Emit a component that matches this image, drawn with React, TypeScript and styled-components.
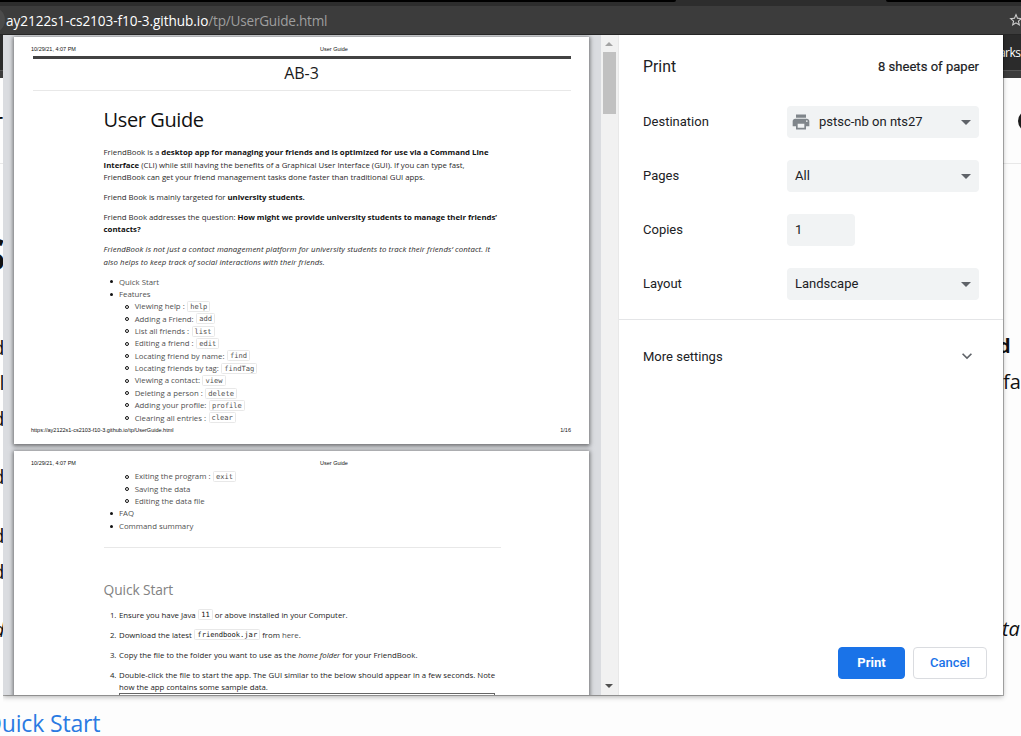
import React from 'react';
import styled, { createGlobalStyle, css } from 'styled-components';
import { MdExpandMore, MdPrint, MdStarBorder } from 'react-icons/md';

const GlobalStyle = createGlobalStyle`
  *, *::before { box-sizing: border-box; }
  body { margin: 0; overflow: hidden; }
`;

const docFont = `'Open Sans', 'Noto Sans', sans-serif`;
const uiFont = `Roboto, 'Liberation Sans', sans-serif`;

/* ---------- browser window behind the dialog ---------- */

const Browser = styled.div`
  position: relative;
  display: flex;
  flex-direction: column;
  width: 1021px;
  height: 736px;
  overflow: hidden;
  background: #fdfdfd;
  font-family: ${docFont};
`;

const TabStrip = styled.div`
  flex: none;
  display: flex;
  justify-content: space-between;
  height: 6px;
  background: #2d2d2d;
`;

const Tab = styled.div<{ $width: number; $side: 'left' | 'right' }>`
  width: ${(p) => p.$width}px;
  height: 2px;
  background: #000;
  border-radius: ${(p) => (p.$side === 'left' ? '0 0 4px 0' : '0 0 0 4px')};
`;

const AddressBar = styled.div`
  flex: none;
  display: flex;
  align-items: center;
  justify-content: space-between;
  height: 29px;
  background: #3c3c3c;
  border-bottom: 1px solid #262626;
  color: #9e9e9e;
  font-size: 13.6px;
  white-space: nowrap;
`;

const AddressText = styled.div`
  display: flex;
  align-items: center;
`;

const SiteBadge = styled.span`
  width: 26px;
  height: 26px;
  margin-left: -21px;
  margin-right: 1px;
  border-radius: 50%;
  background: #4b4b4b;
`;

const Host = styled.span`
  color: #fff;
  letter-spacing: -0.06px;
`;

const UrlPath = styled.span`
  letter-spacing: -0.23px;
`;

const StarSlot = styled.div`
  display: flex;
  width: 13px;
  overflow: hidden;
  color: #d0d0d0;
  svg { flex: none; }
`;

const BookmarksBar = styled.div`
  flex: none;
  display: flex;
  justify-content: flex-end;
  align-items: center;
  height: 36px;
  padding-right: 0.5px;
  background: #2b2b2b;
  border-bottom: 1px solid #555;
  color: #fff;
  font-size: 12px;
  letter-spacing: -0.5px;
`;

const ToolbarEdge = styled.div`
  flex: none;
  height: 7px;
  background: #3c3c3c;
`;

const SiteHeader = styled.div`
  flex: none;
  display: flex;
  align-items: center;
  justify-content: space-between;
  height: 86px;
  padding-bottom: 1px;
  border-bottom: 1px solid #e8e8e8;
  font-size: 24px;
`;

const Avatar = styled.div`
  width: 22px;
  height: 22px;
  margin-top: 2px;
  margin-right: -19px;
  border-radius: 50%;
  background: #1b1b1b;
`;

const ArticleRow = styled.div<{ $height: number; $size?: number; $bold?: boolean; $italic?: boolean }>`
  flex: none;
  display: flex;
  align-items: center;
  justify-content: space-between;
  height: ${(p) => p.$height}px;
  font-size: ${(p) => p.$size ?? 20}px;
  font-weight: ${(p) => (p.$bold ? 700 : 400)};
  font-style: ${(p) => (p.$italic ? 'italic' : 'normal')};
  color: #111;
`;

const EdgeStart = styled.span<{ $width?: number; $lower?: number }>`
  display: flex;
  justify-content: flex-end;
  width: ${(p) => p.$width ?? 4.5}px;
  padding-top: ${(p) => p.$lower ?? 0}px;
`;

const EdgeEnd = styled.span<{ $width: number; $lift?: number }>`
  width: ${(p) => p.$width}px;
  padding-bottom: ${(p) => p.$lift ?? 0}px;
  white-space: nowrap;
`;

const ArticleHeading = styled.div`
  flex: none;
  margin: 37px 0 0 -16px;
  color: #2a7ae2;
  font-size: 23px;
  line-height: 32px;
  letter-spacing: -0.15px;
`;

/* ---------- dialog ---------- */

const Dialog = styled.div`
  position: absolute;
  left: 3px;
  top: 35px;
  display: flex;
  width: 1000px;
  height: 660px;
  background: #fff;
  box-shadow: 0 0 0 1px rgba(0, 0, 0, 0.28), 0 2px 5px rgba(0, 0, 0, 0.3);
  clip-path: inset(0 -8px -10px 0);
`;

const Preview = styled.div`
  display: flex;
  flex-direction: column;
  width: 598px;
  height: 660px;
  padding: 2px 0 0 11px;
  overflow: hidden;
  background: #dadce0;
`;

const Sheet = styled.div`
  flex: none;
  display: flex;
  flex-direction: column;
  width: 575px;
  height: 407px;
  margin-bottom: 7px;
  padding: 6px 18px 8px;
  background: #fff;
  box-shadow: 0 1px 4px 1px rgba(0, 0, 0, 0.5);
  color: #2a2a2a;
  font-family: ${docFont};
  font-size: 7.8px;
  line-height: 12.35px;
`;

const RunningLine = styled.div`
  flex: none;
  display: grid;
  grid-template-columns: 289px 1fr auto;
  height: 12px;
  margin-left: -1px;
  line-height: 12px;
  color: #111;
  font-family: 'Liberation Sans', sans-serif;
  font-size: 5.5px;
  white-space: nowrap;
`;

const RunningFoot = styled(RunningLine)`
  margin-top: auto;
`;

const TopRule = styled.div`
  flex: none;
  height: 3px;
  margin: 1px 0 0 1px;
  background: #424242;
`;

const SiteTitle = styled.div`
  flex: none;
  height: 32px;
  margin-left: 1px;
  padding-right: 1px;
  border-bottom: 1px solid #e8e8e8;
  color: #1a1a1a;
  font-size: 16px;
  line-height: 29px;
  text-align: center;
`;

const Body = styled.div<{ $offset?: number }>`
  display: flex;
  flex-direction: column;
  width: 397px;
  margin: ${(p) => p.$offset ?? 0}px 0 0 71.6px;
`;

const Title = styled.h1`
  margin: 14px 0 11.3px;
  color: #111;
  font-size: 20px;
  font-weight: 400;
  line-height: 30px;
  letter-spacing: -0.4px;
`;

const SectionTitle = styled.h2`
  margin: 32px 0 9.4px;
  color: #828282;
  font-size: 13.8px;
  font-weight: 400;
  line-height: 20px;
  letter-spacing: -0.12px;
`;

const Paragraph = styled.p`
  margin: 0 0 7.65px;
  b { color: #111; }
`;

const Line = styled.span<{ $track?: number }>`
  display: block;
  white-space: nowrap;
  letter-spacing: ${(p) => p.$track ?? 0}px;
`;

const Toc = styled.ul`
  margin: 0;
  padding: 0;
  list-style: none;
  color: #505050;
`;

const TocItem = styled.li<{ $nested?: boolean }>`
  display: flex;
  align-items: center;
  height: 12.36px;
  padding-left: ${(p) => (p.$nested ? 21.4 : 6.4)}px;
  white-space: nowrap;
  &::before {
    content: '';
    flex: none;
    ${(p) =>
      p.$nested
        ? css`
            width: 4px;
            height: 4px;
            margin-right: 5.7px;
            border: 1px solid #111;
          `
        : css`
            width: 3px;
            height: 3px;
            margin-right: 6px;
            background: #111;
          `}
    border-radius: 50%;
  }
`;

const Code = styled.code<{ $dark?: boolean }>`
  display: inline-block;
  height: 11px;
  margin-left: 2.5px;
  padding: 0 2px;
  border: 1px solid #e8e8e8;
  border-radius: 1.5px;
  color: ${(p) => (p.$dark ? '#111' : '#505050')};
  font-family: 'DejaVu Sans Mono', monospace;
  font-size: 7.1px;
  line-height: 10.5px;
`;

const StepCode = styled(Code)`
  margin-right: 2px;
  vertical-align: top;
`;

const Divider = styled.div`
  height: 1px;
  margin-top: 14.5px;
  background: #e8e8e8;
`;

const Steps = styled.ol`
  margin: 0;
  padding: 0;
  list-style: none;
`;

const Step = styled.li`
  display: grid;
  grid-template-columns: 12.4px 1fr;
  column-gap: 3px;
  margin-bottom: 7.65px;
  color: #222;
`;

const StepNumber = styled.span`
  text-align: right;
  letter-spacing: -0.3px;
`;

const StepLink = styled.span`
  color: #505050;
`;

const Screenshot = styled.div`
  width: 376px;
  height: 30px;
  margin: -8.8px 0 0 15.4px;
  border: 1.5px solid #666;
  background: #fff;
`;

const Scrollbar = styled.div`
  display: flex;
  flex-direction: column;
  align-items: center;
  justify-content: space-between;
  width: 18px;
  padding: 7px 1px 7px 0;
  background: #f1f1f1;
  border-right: 1px solid #e8e8e8;
`;

const ScrollTop = styled.div`
  display: flex;
  flex-direction: column;
  align-items: center;
  gap: 6px;
`;

const Triangle = styled.span<{ $up?: boolean; $half: number; $color: string }>`
  flex: none;
  width: 0;
  height: 0;
  border: ${(p) => p.$half}px solid transparent;
  ${(p) =>
    p.$up
      ? css`border-top: 0; border-bottom-color: ${p.$color};`
      : css`border-bottom: 0; border-top-color: ${p.$color};`}
`;

const Thumb = styled.div`
  width: 13px;
  height: 62px;
  background: #c1c1c1;
`;

const Sidebar = styled.div`
  display: flex;
  flex-direction: column;
  flex: 1;
  color: #202124;
  font-family: ${uiFont};
  font-size: 13px;
`;

const SidebarHeader = styled.div`
  display: flex;
  align-items: center;
  justify-content: space-between;
  height: 60px;
  padding: 2px 24px 0;
`;

const Heading = styled.span`
  padding-top: 1px;
  font-size: 15.8px;
`;

const Sheets = styled.span`
  letter-spacing: 0.03px;
  -webkit-text-stroke: 0.2px currentColor;
`;

const Settings = styled.div`
  display: flex;
  flex-direction: column;
  padding-bottom: 8px;
  border-bottom: 1px solid #e4e5e7;
`;

const Setting = styled.div`
  display: grid;
  grid-template-columns: 144px auto;
  align-items: center;
  justify-content: start;
  height: 54px;
  padding: 0 24px;
`;

const Label = styled.span`
  padding-bottom: 2px;
`;

const Field = styled.div<{ $width?: number }>`
  display: flex;
  align-items: center;
  justify-content: space-between;
  width: ${(p) => p.$width ?? 192}px;
  height: 32px;
  padding: 0 8px;
  border-radius: 4px;
  background: #f1f3f4;
`;

const PrinterValue = styled.span`
  display: flex;
  align-items: center;
  gap: 8px;
  margin-left: -4px;
  svg { color: #80868b; }
`;

const MoreSettings = styled.div`
  display: flex;
  align-items: center;
  justify-content: space-between;
  height: 73px;
  padding: 0 26px 0 24px;
  svg {
    margin-bottom: 1px;
    color: #5f6368;
  }
`;

const Actions = styled.div`
  display: flex;
  justify-content: flex-end;
  gap: 8px;
  margin-top: auto;
  padding: 16px;
`;

const Button = styled.button<{ $primary?: boolean }>`
  width: ${(p) => (p.$primary ? 67 : 74)}px;
  height: 32px;
  padding: 0 0 2px;
  border: 1px solid ${(p) => (p.$primary ? '#1a73e8' : '#dadce0')};
  border-radius: 4px;
  background: ${(p) => (p.$primary ? '#1a73e8' : '#fff')};
  color: ${(p) => (p.$primary ? '#fff' : '#1a73e8')};
  font-family: ${uiFont};
  font-size: 13px;
  font-weight: ${(p) => (p.$primary ? 700 : 500)};
`;

const features: [string, string][] = [
  ['Viewing help :', 'help'],
  ['Adding a Friend:', 'add'],
  ['List all friends :', 'list'],
  ['Editing a friend :', 'edit'],
  ['Locating friend by name:', 'find'],
  ['Locating friends by tag:', 'findTag'],
  ['Viewing a contact:', 'view'],
  ['Deleting a person :', 'delete'],
  ['Adding your profile:', 'profile'],
  ['Clearing all entries :', 'clear'],
];

function FirstSheet() {
  return (
    <Sheet>
      <RunningLine>
        <span>10/29/21, 4:07 PM</span>
        <span>User Guide</span>
      </RunningLine>
      <TopRule />
      <SiteTitle>AB-3</SiteTitle>
      <Body>
        <Title>User Guide</Title>
        <Paragraph>
          <Line>
            FriendBook is a <b>desktop app for managing your friends and is optimized for use via a Command Line</b>
          </Line>
          <Line>
            <b>Interface</b> (CLI) while still having the benefits of a Graphical User Interface (GUI). If you can type fast,
          </Line>
          <Line $track={-0.015}>FriendBook can get your friend management tasks done faster than traditional GUI apps.</Line>
        </Paragraph>
        <Paragraph>
          <Line $track={-0.03}>
            Friend Book is mainly targeted for <b>university students.</b>
          </Line>
        </Paragraph>
        <Paragraph>
          <Line $track={-0.02}>
            Friend Book addresses the question: <b>How might we provide university students to manage their friends’</b>
          </Line>
          <Line>
            <b>contacts?</b>
          </Line>
        </Paragraph>
        <Paragraph>
          <Line $track={0.095}>
            <i>FriendBook is not just a contact management platform for university students to track their friends’ contact. It</i>
          </Line>
          <Line $track={0.07}>
            <i>also helps to keep track of social interactions with their friends.</i>
          </Line>
        </Paragraph>
        <Toc>
          <TocItem>Quick Start</TocItem>
          <TocItem>Features</TocItem>
          {features.map(([label, command]) => (
            <TocItem $nested key={command}>
              {label}
              <Code>{command}</Code>
            </TocItem>
          ))}
        </Toc>
      </Body>
      <RunningFoot>
        <span>https://ay2122s1-cs2103-f10-3.github.io/tp/UserGuide.html</span>
        <span />
        <span>1/16</span>
      </RunningFoot>
    </Sheet>
  );
}

function SecondSheet() {
  return (
    <Sheet>
      <RunningLine>
        <span>10/29/21, 4:07 PM</span>
        <span>User Guide</span>
      </RunningLine>
      <Body $offset={1.4}>
        <Toc>
          <TocItem $nested>
            Exiting the program :<Code>exit</Code>
          </TocItem>
          <TocItem $nested>Saving the data</TocItem>
          <TocItem $nested>Editing the data file</TocItem>
          <TocItem>FAQ</TocItem>
          <TocItem>Command summary</TocItem>
        </Toc>
        <Divider />
        <SectionTitle>Quick Start</SectionTitle>
        <Steps>
          <Step>
            <StepNumber>1.</StepNumber>
            <Line>
              Ensure you have Java<StepCode $dark>11</StepCode>or above installed in your Computer.
            </Line>
          </Step>
          <Step>
            <StepNumber>2.</StepNumber>
            <Line>
              Download the latest<StepCode $dark>friendbook.jar</StepCode>from <StepLink>here</StepLink>.
            </Line>
          </Step>
          <Step>
            <StepNumber>3.</StepNumber>
            <Line $track={0.02}>
              Copy the file to the folder you want to use as the <i>home folder</i> for your FriendBook.
            </Line>
          </Step>
          <Step>
            <StepNumber>4.</StepNumber>
            <div>
              <Line $track={0.015}>
                Double-click the file to start the app. The GUI similar to the below should appear in a few seconds. Note
              </Line>
              <Line>how the app contains some sample data.</Line>
            </div>
          </Step>
        </Steps>
        <Screenshot />
      </Body>
    </Sheet>
  );
}

function Backdrop() {
  return (
    <>
      <TabStrip>
        <Tab $width={676} $side="left" />
        <Tab $width={135} $side="right" />
      </TabStrip>
      <AddressBar>
        <AddressText>
          <SiteBadge />
          <Host>ay2122s1-cs2103-f10-3.github.io</Host>
          <UrlPath>/tp/UserGuide.html</UrlPath>
        </AddressText>
        <StarSlot>
          <MdStarBorder size={16} />
        </StarSlot>
      </AddressBar>
      <BookmarksBar>bookmarks</BookmarksBar>
      <ToolbarEdge />
      <SiteHeader>
        <EdgeStart $width={3}>r</EdgeStart>
        <Avatar />
      </SiteHeader>
      <ArticleRow $height={166} $size={44} $bold>
        <EdgeStart $width={5.5} $lower={14}>S</EdgeStart>
      </ArticleRow>
      <ArticleRow $height={34}>
        <EdgeStart>d</EdgeStart>
        <EdgeEnd $width={23} $lift={4}>
          <b>d</b>
        </EdgeEnd>
      </ArticleRow>
      <ArticleRow $height={37}>
        <EdgeStart>l</EdgeStart>
        <EdgeEnd $width={18} $lift={2}>fa</EdgeEnd>
      </ArticleRow>
      <ArticleRow $height={35}>
        <EdgeStart>d</EdgeStart>
      </ArticleRow>
      <ArticleRow $height={80}>
        <EdgeStart>d</EdgeStart>
      </ArticleRow>
      <ArticleRow $height={38}>
        <EdgeStart>d</EdgeStart>
      </ArticleRow>
      <ArticleRow $height={34}>
        <EdgeStart>d</EdgeStart>
      </ArticleRow>
      <ArticleRow $height={82} $italic>
        <EdgeStart>d</EdgeStart>
        <EdgeEnd $width={19} $lift={2}>ta</EdgeEnd>
      </ArticleRow>
      <ArticleHeading>Quick Start</ArticleHeading>
    </>
  );
}

export default function App() {
  return (
    <Browser>
      <GlobalStyle />
      <Backdrop />
      <Dialog>
        <Preview>
          <FirstSheet />
          <SecondSheet />
        </Preview>
        <Scrollbar>
          <ScrollTop>
            <Triangle $up $half={4} $color="#a3a3a3" />
            <Thumb />
          </ScrollTop>
          <Triangle $half={4} $color="#505050" />
        </Scrollbar>
        <Sidebar>
          <SidebarHeader>
            <Heading>Print</Heading>
            <Sheets>8 sheets of paper</Sheets>
          </SidebarHeader>
          <Settings>
            <Setting>
              <Label>Destination</Label>
              <Field>
                <PrinterValue>
                  <MdPrint size={20} />
                  <Label>pstsc-nb on nts27</Label>
                </PrinterValue>
                <Triangle $half={5} $color="#5f6368" />
              </Field>
            </Setting>
            <Setting>
              <Label>Pages</Label>
              <Field>
                <Label>All</Label>
                <Triangle $half={5} $color="#5f6368" />
              </Field>
            </Setting>
            <Setting>
              <Label>Copies</Label>
              <Field $width={68}>
                <Label>1</Label>
              </Field>
            </Setting>
            <Setting>
              <Label>Layout</Label>
              <Field>
                <Label>Landscape</Label>
                <Triangle $half={5} $color="#5f6368" />
              </Field>
            </Setting>
          </Settings>
          <MoreSettings>
            <span>More settings</span>
            <MdExpandMore size={20} />
          </MoreSettings>
          <Actions>
            <Button $primary>Print</Button>
            <Button>Cancel</Button>
          </Actions>
        </Sidebar>
      </Dialog>
    </Browser>
  );
}
